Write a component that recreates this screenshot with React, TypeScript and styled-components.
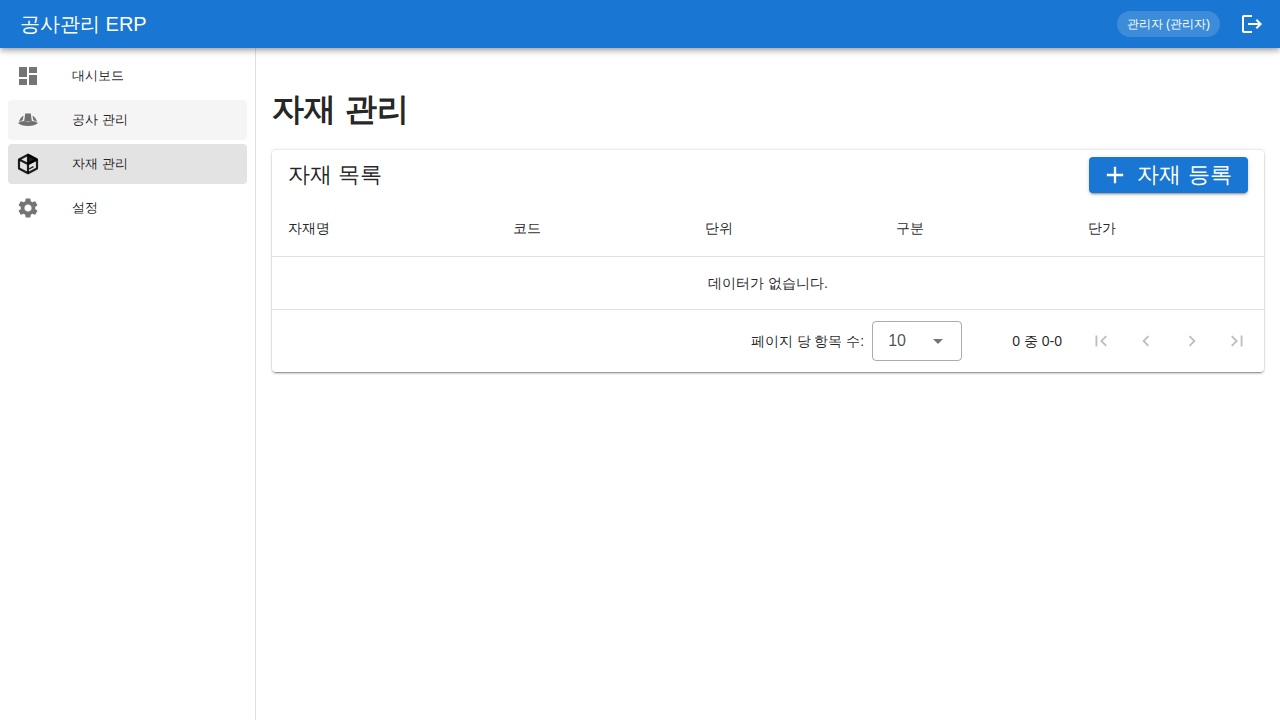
import React from 'react';
import styled, { createGlobalStyle } from 'styled-components';
import {
  MdAdd,
  MdArrowDropDown,
  MdChevronLeft,
  MdChevronRight,
  MdDashboard,
  MdFirstPage,
  MdLastPage,
  MdLogout,
  MdSettings,
} from 'react-icons/md';

const HardHatIcon = () => (
  <svg width="24" height="24" viewBox="0 0 24 24" fill="currentColor">
    <path d="M9.200 5.500h5.600l1 7.500H8.200z" />
    <path d="M7.600 7.800 6.600 12.300c-1.400.3-2.700.9-3.600 1.700.5-2.800 2.200-5 4.600-6.200zM16.400 7.800l1 4.500c1.400.3 2.700.9 3.600 1.700-.5-2.800-2.200-5-4.600-6.200z" />
    <path d="M2 15C5 12.800 8.500 12.400 12 13.600 15.500 12.400 19 12.800 22 15 20 17 16.500 18 12 18S4 17 2 15z" />
  </svg>
);

const BoxIcon = () => (
  <svg width="24" height="24" viewBox="0 0 24 24" fill="none" stroke="currentColor" strokeWidth="2.200" strokeLinejoin="round">
    <path d="M12 2.800 21 7.400v9.200L12 21.200l-9-4.600V7.400z" />
    <path d="M3 7.500 12 12l9-4.500M12 12v9" />
    <path d="M12 3v9l8.500-4.500z" fill="currentColor" />
    <path d="M13 17l4.500-2.400" strokeWidth="1.400" />
  </svg>
);

const NAV_ITEMS = [
  { label: '대시보드', icon: <MdDashboard size={24} />, state: 'idle' },
  { label: '공사 관리', icon: <HardHatIcon />, state: 'hover' },
  { label: '자재 관리', icon: <BoxIcon />, state: 'active' },
  { label: '설정', icon: <MdSettings size={24} />, state: 'idle' },
];

const COLUMNS = [
  { label: '자재명', width: 225 },
  { label: '코드', width: 192 },
  { label: '단위', width: 191 },
  { label: '구분', width: 192 },
  { label: '단가', width: 192 },
];

const GlobalStyle = createGlobalStyle`
  html, body {
    margin: 0;
    padding: 0;
    height: 100%;
    background: #fff;
  }
  body {
    font-family: "Liberation Sans", sans-serif;
    color: rgba(0, 0, 0, 0.87);
    overflow: hidden;
  }
  * {
    box-sizing: border-box;
  }
`;

const Page = styled.div`
  width: 1280px;
  height: 720px;
  display: flex;
  flex-direction: column;
`;

const TopBar = styled.header`
  height: 48px;
  flex: none;
  display: flex;
  align-items: center;
  padding: 0 16px 0 20px;
  background: #1976d2;
  color: #fff;
  position: relative;
  z-index: 2;
  box-shadow: 0 2px 4px -1px rgba(0, 0, 0, 0.2), 0 4px 5px 0 rgba(0, 0, 0, 0.14), 0 1px 10px 0 rgba(0, 0, 0, 0.12);
`;

const Brand = styled.div`
  flex: 1;
  font-size: 20px;
  line-height: 1.6;
`;

const UserChip = styled.div`
  height: 26px;
  padding: 0 10px;
  display: flex;
  align-items: center;
  border-radius: 13px;
  font-size: 12px;
  color: #fff;
  background: rgba(255, 255, 255, 0.16);
`;

const LogoutButton = styled.button`
  width: 24px;
  height: 24px;
  margin-left: 20px;
  padding: 0;
  border: 0;
  background: none;
  color: #fff;
  display: flex;
`;

const Body = styled.div`
  flex: 1;
  display: flex;
  min-height: 0;
`;

const Sidebar = styled.nav`
  width: 256px;
  flex: none;
  padding: 8px 8px;
  border-right: 1px solid rgba(0, 0, 0, 0.12);
  display: flex;
  flex-direction: column;
  gap: 4px;
`;

const NavRow = styled.div<{ $state: string }>`
  height: 40px;
  display: flex;
  align-items: center;
  padding: 0 8px;
  border-radius: 4px;
  font-size: 13px;
  line-height: 20px;
  background: ${({ $state }) =>
    $state === 'active' ? '#e3e3e3' : $state === 'hover' ? '#f5f5f5' : 'transparent'};
`;

const NavIcon = styled.span<{ $active: boolean }>`
  width: 56px;
  flex: none;
  display: flex;
  padding-left: 0;
  color: ${({ $active }) => ($active ? 'rgba(0, 0, 0, 0.87)' : 'rgba(0, 0, 0, 0.54)')};
`;

const Main = styled.main`
  flex: 1;
  min-width: 0;
  padding: 16px;
`;

const Title = styled.h1`
  margin: 23px 0 19px;
  font-size: 32px;
  line-height: 44px;
  font-weight: 700;
`;

const Card = styled.section`
  background: #fff;
  border-radius: 4px;
  box-shadow: 0 3px 1px -2px rgba(0, 0, 0, 0.25), 0 2px 2px 0 rgba(0, 0, 0, 0.14), 0 0 3px 0 rgba(0, 0, 0, 0.22);
`;

const CardHeader = styled.div`
  height: 53px;
  padding: 7px 16px 0;
  display: flex;
  justify-content: space-between;
  align-items: flex-start;
`;

const CardTitle = styled.h2`
  margin: 0;
  font-size: 22px;
  line-height: 36px;
  font-weight: 400;
`;

const AddButton = styled.button`
  width: 159px;
  height: 36px;
  display: flex;
  align-items: center;
  justify-content: center;
  gap: 8px;
  border: 0;
  padding: 0 4px 0 0;
  border-radius: 4px;
  background: #1976d2;
  color: #fff;
  font-family: inherit;
  font-size: 22px;
  box-shadow: 0 3px 1px -2px rgba(0, 0, 0, 0.2), 0 2px 2px 0 rgba(0, 0, 0, 0.14), 0 1px 5px 0 rgba(0, 0, 0, 0.12);
`;

const Table = styled.table`
  width: 100%;
  border-collapse: collapse;
  table-layout: fixed;
  font-size: 14px;
`;

const HeaderCell = styled.th`
  height: 53px;
  padding: 0 16px;
  text-align: left;
  font-weight: 400;
  border-bottom: 1px solid #e0e0e0;
`;

const EmptyCell = styled.td`
  height: 53px;
  padding: 2px 0 0;
  text-align: center;
  border-bottom: 1px solid #e0e0e0;
`;

const Pagination = styled.div`
  height: 62px;
  display: flex;
  align-items: center;
  justify-content: flex-end;
  padding-right: 7px;
  font-size: 14px;
`;

const PageSizeLabel = styled.span`
  margin: 2px 8px 0 0;
`;

const PageSizeSelect = styled.div`
  width: 90px;
  height: 40px;
  padding: 0 11px 0 15px;
  display: flex;
  align-items: center;
  justify-content: space-between;
  border: 1px solid rgba(0, 0, 0, 0.33);
  border-radius: 4px;
  font-size: 16px;
  color: rgba(0, 0, 0, 0.7);

  svg {
    color: rgba(0, 0, 0, 0.54);
  }
`;

const PageRange = styled.span`
  margin: 2px 13px 0 50px;
`;

const PageButton = styled.span`
  width: 40px;
  height: 40px;
  margin-left: 5.500px;
  display: flex;
  align-items: center;
  justify-content: center;
  color: rgba(0, 0, 0, 0.26);

  &:first-of-type {
    margin-left: 0;
  }
`;

export default function App() {
  return (
    <Page>
      <GlobalStyle />
      <TopBar>
        <Brand>공사관리 ERP</Brand>
        <UserChip>관리자 (관리자)</UserChip>
        <LogoutButton>
          <MdLogout size={24} />
        </LogoutButton>
      </TopBar>
      <Body>
        <Sidebar>
          {NAV_ITEMS.map((item) => (
            <NavRow key={item.label} $state={item.state}>
              <NavIcon $active={item.state === 'active'}>{item.icon}</NavIcon>
              {item.label}
            </NavRow>
          ))}
        </Sidebar>
        <Main>
          <Title>자재 관리</Title>
          <Card>
            <CardHeader>
              <CardTitle>자재 목록</CardTitle>
              <AddButton>
                <MdAdd size={28} />
                자재 등록
              </AddButton>
            </CardHeader>
            <Table>
              <colgroup>
                {COLUMNS.map((col) => (
                  <col key={col.label} width={col.width} />
                ))}
              </colgroup>
              <thead>
                <tr>
                  {COLUMNS.map((col) => (
                    <HeaderCell key={col.label}>{col.label}</HeaderCell>
                  ))}
                </tr>
              </thead>
              <tbody>
                <tr>
                  <EmptyCell colSpan={5}>데이터가 없습니다.</EmptyCell>
                </tr>
              </tbody>
            </Table>
            <Pagination>
              <PageSizeLabel>페이지 당 항목 수:</PageSizeLabel>
              <PageSizeSelect>
                10
                <MdArrowDropDown size={24} />
              </PageSizeSelect>
              <PageRange>0 중 0-0</PageRange>
              <PageButton><MdFirstPage size={22} /></PageButton>
              <PageButton><MdChevronLeft size={22} /></PageButton>
              <PageButton><MdChevronRight size={22} /></PageButton>
              <PageButton><MdLastPage size={22} /></PageButton>
            </Pagination>
          </Card>
        </Main>
      </Body>
    </Page>
  );
}
